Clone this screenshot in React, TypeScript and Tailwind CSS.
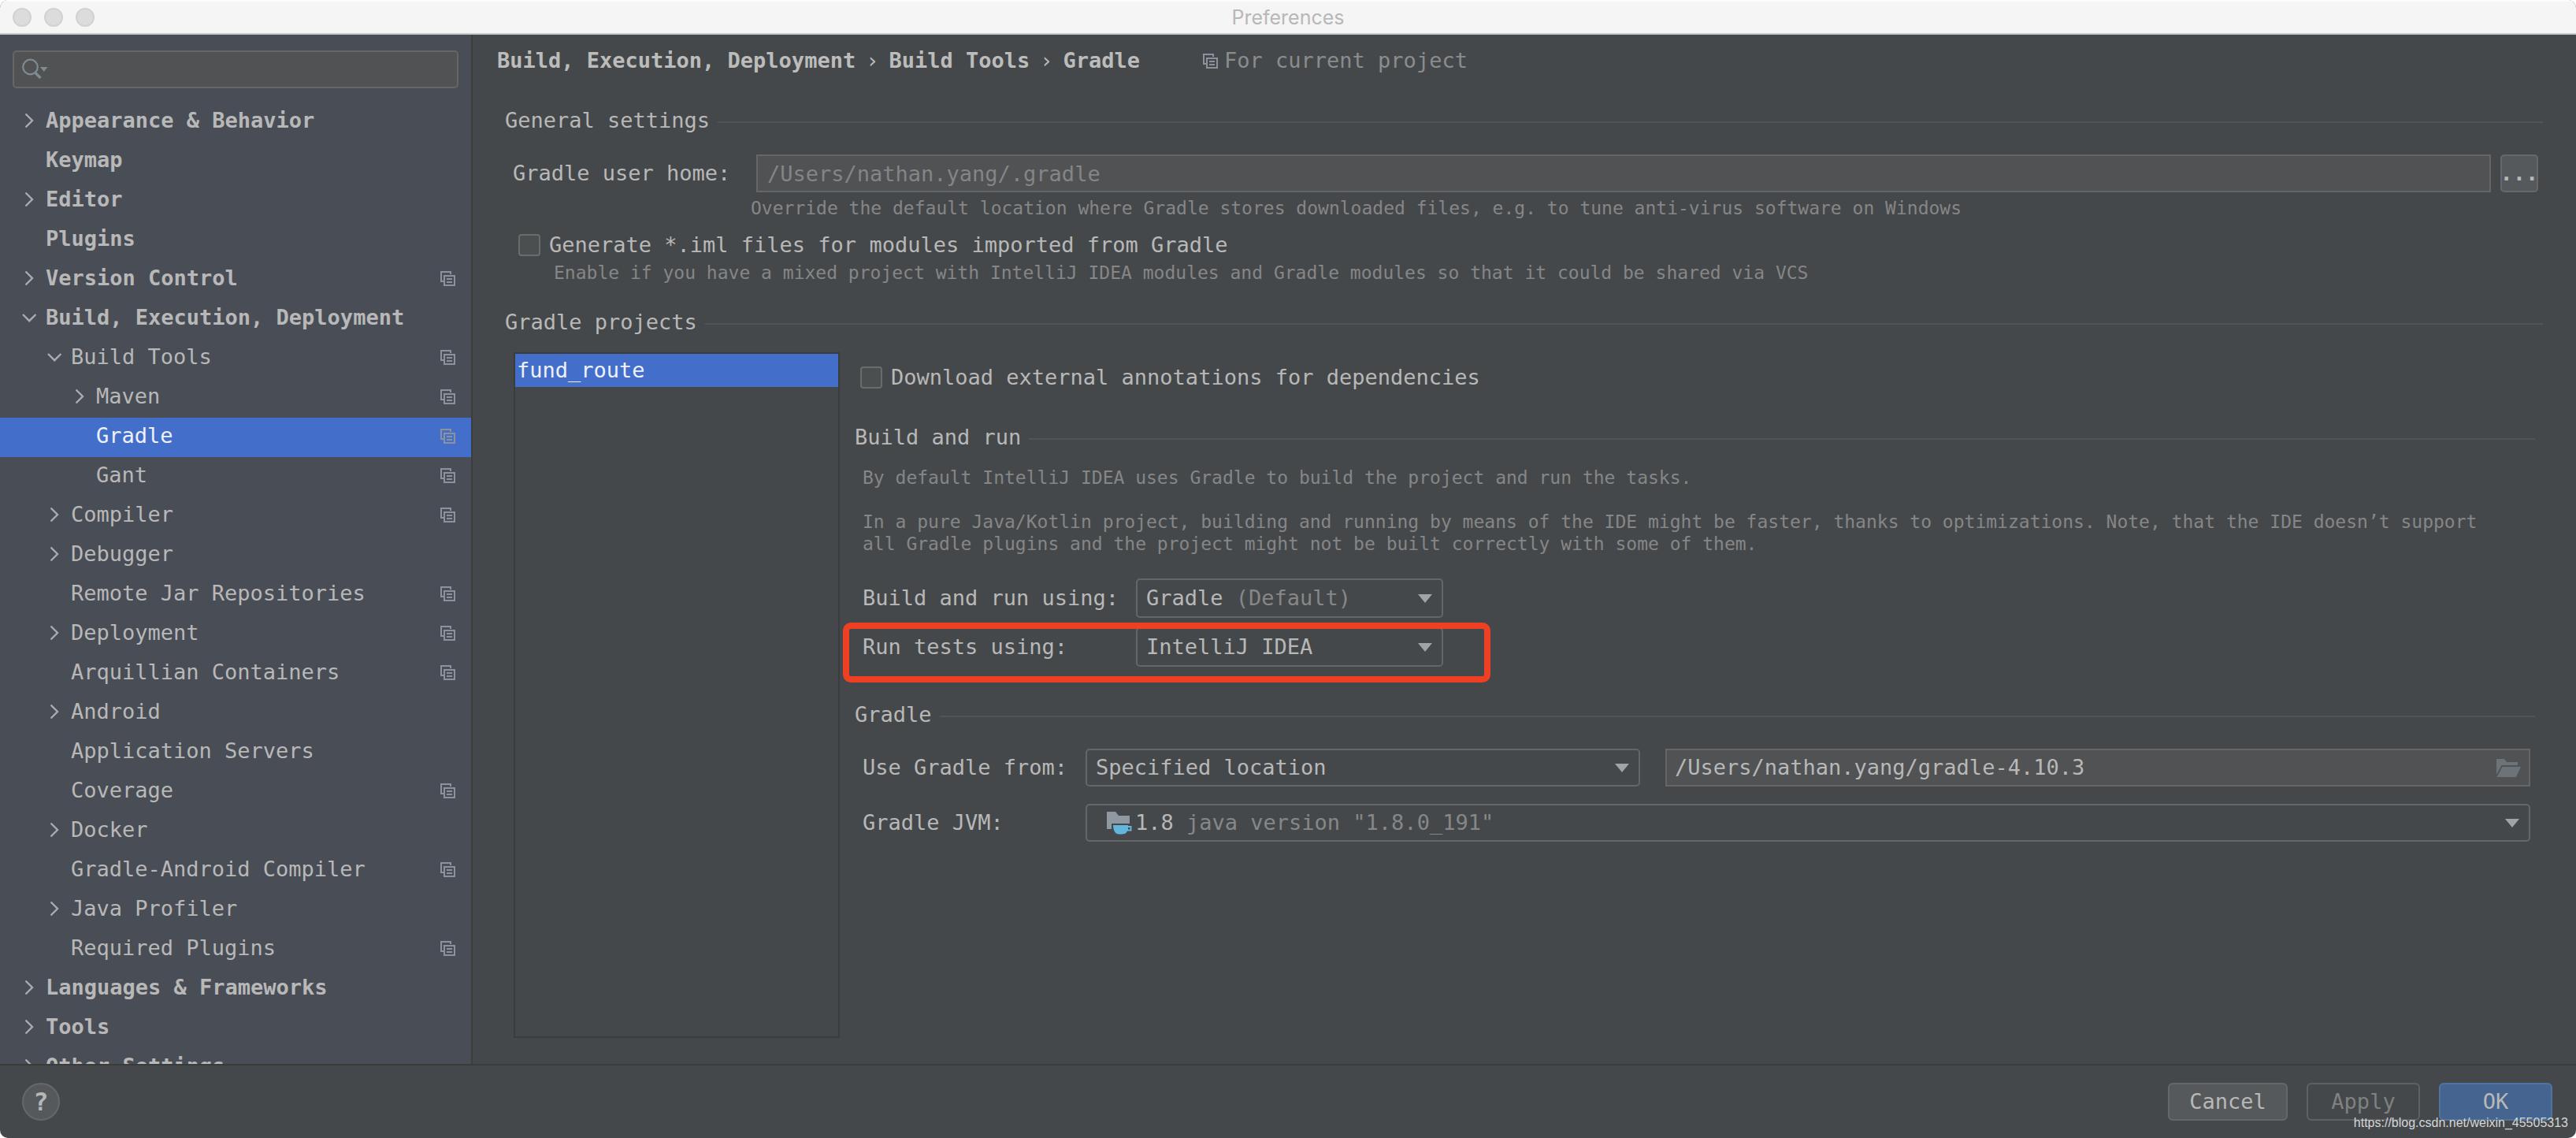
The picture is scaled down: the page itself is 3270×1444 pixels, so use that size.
import { useState, type ReactNode } from "react";

type TreeItem = {
  label: string;
  level: 0 | 1 | 2;
  arrow?: "open" | "closed";
  perProject?: boolean;
};

const TREE: TreeItem[] = [
  { label: "Appearance & Behavior", level: 0, arrow: "closed" },
  { label: "Keymap", level: 0 },
  { label: "Editor", level: 0, arrow: "closed" },
  { label: "Plugins", level: 0 },
  { label: "Version Control", level: 0, arrow: "closed", perProject: true },
  { label: "Build, Execution, Deployment", level: 0, arrow: "open" },
  { label: "Build Tools", level: 1, arrow: "open", perProject: true },
  { label: "Maven", level: 2, arrow: "closed", perProject: true },
  { label: "Gradle", level: 2, perProject: true },
  { label: "Gant", level: 2, perProject: true },
  { label: "Compiler", level: 1, arrow: "closed", perProject: true },
  { label: "Debugger", level: 1, arrow: "closed" },
  { label: "Remote Jar Repositories", level: 1, perProject: true },
  { label: "Deployment", level: 1, arrow: "closed", perProject: true },
  { label: "Arquillian Containers", level: 1, perProject: true },
  { label: "Android", level: 1, arrow: "closed" },
  { label: "Application Servers", level: 1 },
  { label: "Coverage", level: 1, perProject: true },
  { label: "Docker", level: 1, arrow: "closed" },
  { label: "Gradle-Android Compiler", level: 1, perProject: true },
  { label: "Java Profiler", level: 1, arrow: "closed" },
  { label: "Required Plugins", level: 1, perProject: true },
  { label: "Languages & Frameworks", level: 0, arrow: "closed" },
  { label: "Tools", level: 0, arrow: "closed" },
  { label: "Other Settings", level: 0, arrow: "closed" },
];

const INDENT = ["pl-[26px]", "pl-[58px]", "pl-[90px]"];

function ProjectIcon() {
  return (
    <svg width="19" height="19" viewBox="0 0 19 19" fill="none" stroke="currentColor" strokeWidth="2" className="shrink-0" aria-hidden="true">
      <path d="M4 13H1V1h12v3" />
      <path d="M5 6h13v12H5z" />
      <path d="M8 10h7M8 14h7" />
    </svg>
  );
}

function TreeArrow({ state }: { state?: "open" | "closed" }) {
  return (
    <svg width="22" height="22" viewBox="0 0 22 22" fill="none" stroke="#a9acaf" strokeWidth="2.4" className="shrink-0" aria-hidden="true">
      {state === "closed" && <path d="M6.5 2.5L15 11L6.5 19.5" />}
      {state === "open" && <path d="M3 7L11.2 15.2L19.4 7" />}
    </svg>
  );
}

function DownArrow() {
  return (
    <svg width="18" height="11" viewBox="0 0 18 11" fill="#a0a3a7" className="pointer-events-none shrink-0" aria-hidden="true">
      <path d="M0 0h18L9 11z" />
    </svg>
  );
}

function JdkIcon() {
  return (
    <svg width="32" height="30" viewBox="0 0 32 30" className="shrink-0" aria-hidden="true">
      <path d="M0 1h11l4 5h14v10H6v7H0z" fill="#9099a2" />
      <path d="M8 18h19v1h4.500v6.500H26C24.500 28.500 22.500 29.500 19 29.500h-4C10.500 29.500 8 24 8 18z" fill="#62b5dc" />
      <path d="M27 21h2.500v2.500H27z" fill="#45484a" />
    </svg>
  );
}

function OpenFolderIcon() {
  return (
    <svg width="31" height="23" viewBox="0 0 31 23" fill="#6c7478" aria-hidden="true">
      <path d="M0 0h10l3 4h14v4H6.500L0 20z" />
      <path d="M7.500 10H31l-6 13H0.500z" />
    </svg>
  );
}

function SectionTitle({ children }: { children: ReactNode }) {
  return (
    <h2 className="flex items-center gap-[10px]">
      <span>{children}</span>
      <span className="mt-1 h-[2px] flex-1 bg-[#535455]" />
    </h2>
  );
}

function Checkbox({ id, label }: { id: string; label: string }) {
  return (
    <div className="flex items-center gap-[11px]">
      <input id={id} type="checkbox" className="size-7 shrink-0 appearance-none rounded-[4px] border-2 border-[#6a6b6c] bg-[#4b4f50] checked:bg-[#436fcb]" />
      <label htmlFor={id}>{label}</label>
    </div>
  );
}

function ComboBox({ id, value, className, children }: { id: string; value: string; className: string; children: ReactNode }) {
  return (
    <div className={`relative flex items-center rounded-[5px] border-2 border-[#656667] pr-3 pl-[11px] ${className}`}>
      <span className="flex flex-1 items-center whitespace-pre" aria-hidden="true">
        {children}
      </span>
      <DownArrow />
      <select id={id} className="absolute inset-0 size-full appearance-none opacity-0">
        <option>{value}</option>
      </select>
    </div>
  );
}

function Sidebar() {
  const [selected, setSelected] = useState("Gradle");
  return (
    <aside className="flex w-[600px] shrink-0 flex-col overflow-hidden border-r-2 border-[#3c3e3e] bg-[#494d56]">
      <div className="mx-4 mt-5 flex h-12 shrink-0 items-center rounded-[5px] border-2 border-[#656665] bg-[#515253] px-[10px]">
        <svg width="34" height="30" viewBox="0 0 34 30" fill="none" className="shrink-0" aria-hidden="true">
          <circle cx="10.500" cy="12" r="9.300" stroke="#7e8b92" strokeWidth="2.200" />
          <path d="M16.500 19l7 7" stroke="#7e8b92" strokeWidth="3.400" />
          <path d="M23 12h9.500l-4.700 6z" fill="#7e8b92" />
        </svg>
        <input type="search" aria-label="Search settings" className="min-w-0 flex-1 bg-transparent outline-none" />
      </div>
      <ul className="mt-[18px] min-h-0 flex-1 overflow-hidden">
        {TREE.map((item) => {
          const active = item.label === selected;
          return (
            <li key={item.label}>
              <button
                type="button"
                onClick={() => setSelected(item.label)}
                className={`flex h-[50px] w-full items-center gap-[10px] pr-5 pb-1 text-left ${INDENT[item.level]} ${
                  active ? "bg-[#436fcb] text-[#eef1f7]" : "text-[#b8b8b8]"
                } ${item.level === 0 ? "font-bold" : ""}`}
              >
                <TreeArrow state={item.arrow} />
                <span className="flex-1 whitespace-nowrap">{item.label}</span>
                {item.perProject && (
                  <span className="text-[#8a939b]">
                    <ProjectIcon />
                  </span>
                )}
              </button>
            </li>
          );
        })}
      </ul>
    </aside>
  );
}

function ProjectSettings() {
  return (
    <div className="min-w-0 flex-1 pt-4 pr-[10px]">
      <div className="pl-[7px]">
        <Checkbox id="annotations" label="Download external annotations for dependencies" />
      </div>

      <div className="mt-11">
        <SectionTitle>Build and run</SectionTitle>
      </div>
      <div className="mt-[21px] pr-[6px] pl-[10px]">
        <div className="pr-8 text-[23px] leading-7 text-[#858687]">
          <p>By default IntelliJ IDEA uses Gradle to build the project and run the tasks.</p>
          <p className="mt-7">
            In a pure Java/Kotlin project, building and running by means of the IDE might be faster, thanks to
            optimizations. Note, that the IDE doesn’t support all Gradle plugins and the project might not be built
            correctly with some of them.
          </p>
        </div>
        <div className="mt-[30px] flex items-center">
          <label htmlFor="build-using" className="w-[347px]">Build and run using:</label>
          <ComboBox id="build-using" value="Gradle (Default)" className="h-[50px] w-[390px]">
            Gradle <span className="text-[#868788]">(Default)</span>
          </ComboBox>
        </div>
        <div className="relative mt-3 flex items-center">
          <label htmlFor="tests-using" className="w-[347px]">Run tests using:</label>
          <ComboBox id="tests-using" value="IntelliJ IDEA" className="h-[50px] w-[390px]">
            IntelliJ IDEA
          </ComboBox>
          <div className="pointer-events-none absolute -top-[6px] -left-[25px] h-[76px] w-[822px] rounded-[10px] border-8 border-[#ef4023]" />
        </div>
      </div>

      <div className="mt-[45px]">
        <SectionTitle>Gradle</SectionTitle>
      </div>
      <div className="mt-[27px] flex flex-col gap-[22px] pr-[6px] pl-[10px]">
        <div className="flex items-center">
          <label htmlFor="gradle-from" className="w-[283px] shrink-0">Use Gradle from:</label>
          <div className="grid min-w-0 flex-1 grid-cols-[704fr_1098fr] gap-8">
            <ComboBox id="gradle-from" value="Specified location" className="h-12">
              Specified location
            </ComboBox>
            <div className="flex h-12 min-w-0 items-center border-2 border-[#656667] bg-[#515253] px-[10px]">
              <input aria-label="Gradle location" defaultValue="/Users/nathan.yang/gradle-4.10.3" className="min-w-0 flex-1 bg-transparent outline-none" />
              <button type="button" aria-label="Browse">
                <OpenFolderIcon />
              </button>
            </div>
          </div>
        </div>
        <div className="flex items-center">
          <label htmlFor="gradle-jvm" className="w-[283px] shrink-0">Gradle JVM:</label>
          <ComboBox id="gradle-jvm" value='1.8 java version "1.8.0_191"' className="h-12 flex-1">
            <span className="mr-1 ml-[14px]">
              <JdkIcon />
            </span>
            <span>1.8 </span>
            <span className="text-[#868788]">java version "1.8.0_191"</span>
          </ComboBox>
        </div>
      </div>
    </div>
  );
}

function GradlePage() {
  return (
    <main className="flex min-w-0 flex-1 flex-col pt-[17px] pr-[42px] pb-[33px]">
      <nav className="flex items-center gap-[13px] pl-[31px] font-bold text-[#bcbcbc]">
        <span>Build, Execution, Deployment</span>
        <span className="font-normal">›</span>
        <span>Build Tools</span>
        <span className="font-normal">›</span>
        <span>Gradle</span>
        <span className="ml-[67px] flex items-center gap-2 font-normal text-[#8b8c8d]">
          <span className="text-[#8a939b]">
            <ProjectIcon />
          </span>
          For current project
        </span>
      </nav>

      <section className="mt-11 pl-[41px]">
        <SectionTitle>General settings</SectionTitle>
        <div className="mt-[27px] flex items-center pr-[6px] pl-[10px]">
          <label htmlFor="user-home" className="w-[309px] shrink-0">Gradle user home:</label>
          <input
            id="user-home"
            placeholder="/Users/nathan.yang/.gradle"
            className="h-12 min-w-0 flex-1 border-2 border-[#656667] bg-[#515253] px-3 outline-none placeholder:text-[#848586] placeholder:opacity-100"
          />
          <button type="button" aria-label="Browse" className="ml-3 flex h-12 w-12 items-center justify-center rounded-[5px] border-2 border-[#65686a] bg-[#55595b] font-bold">
            ...
          </button>
        </div>
        <p className="mt-[6px] pl-[312px] text-[23px] leading-7 text-[#858687]">
          Override the default location where Gradle stores downloaded files, e.g. to tune anti-virus software on Windows
        </p>
        <div className="mt-[17px] pl-[17px]">
          <Checkbox id="iml" label="Generate *.iml files for modules imported from Gradle" />
        </div>
        <p className="mt-[5px] pl-[62px] text-[23px] leading-7 text-[#858687]">
          Enable if you have a mixed project with IntelliJ IDEA modules and Gradle modules so that it could be shared via VCS
        </p>
      </section>

      <section className="mt-[33px] flex min-h-0 flex-1 flex-col pl-[41px]">
        <SectionTitle>Gradle projects</SectionTitle>
        <div className="mt-[22px] flex min-h-0 flex-1 gap-[19px] pl-[11px]">
          <ul className="w-[414px] shrink-0 border-2 border-[#3a3c3d]">
            <li>
              <button type="button" className="flex h-[42px] w-full items-center bg-[#436fcb] px-[2px] text-[#eef1f7]">
                fund_route
              </button>
            </li>
          </ul>
          <ProjectSettings />
        </div>
      </section>
    </main>
  );
}

export default function App() {
  return (
    <div className="h-screen bg-white">
      <div className="relative flex h-full flex-col overflow-hidden rounded-[10px] bg-[#45484a] font-['DejaVu_Sans_Mono',monospace] text-[27px] leading-8 text-[#b8b8b8]">
        <header className="grid h-11 shrink-0 grid-cols-[1fr_auto_1fr] items-center border-t-2 border-b-2 border-t-[#fcfcfc] border-b-[#c9cacb] bg-[#f5f5f5] px-4">
          <div className="flex gap-4">
            <button type="button" aria-label="Close" className="size-6 rounded-full border-2 border-[#d2d2d2] bg-[#dcdcdc]" />
            <button type="button" aria-label="Minimize" className="size-6 rounded-full border-2 border-[#d2d2d2] bg-[#dcdcdc]" />
            <button type="button" aria-label="Zoom" className="size-6 rounded-full border-2 border-[#d2d2d2] bg-[#dcdcdc]" />
          </div>
          <h1 className="font-['Inter',sans-serif] text-[25px] text-[#b8b8b8]">Preferences</h1>
        </header>

        <div className="flex min-h-0 flex-1">
          <Sidebar />
          <GradlePage />
        </div>

        <footer className="flex h-[94px] shrink-0 items-center border-t-2 border-[#3a3c3c] pr-[30px] pl-7">
          <button type="button" aria-label="Help" className="flex size-12 items-center justify-center rounded-full border-2 border-[#65686a] bg-[#55595b] text-[32px] font-bold text-[#b4b6b7]">
            ?
          </button>
          <div className="ml-auto flex gap-6">
            <button type="button" className="h-12 w-[152px] rounded-[6px] border-2 border-[#65686a] bg-[#55595b]">
              Cancel
            </button>
            <button type="button" disabled className="h-12 w-36 rounded-[6px] border-2 border-[#5f6163] text-[#7f8182]">
              Apply
            </button>
            <button type="button" className="h-12 w-36 rounded-[6px] border-2 border-[#50749d] bg-[#456590]">
              OK
            </button>
          </div>
        </footer>

        <a href="https://blog.csdn.net/weixin_45505313" className="absolute right-[10px] bottom-[9px] font-['Liberation_Sans',sans-serif] text-base leading-5 text-[#d6d7d8]">
          https://blog.csdn.net/weixin_45505313
        </a>
      </div>
    </div>
  );
}
